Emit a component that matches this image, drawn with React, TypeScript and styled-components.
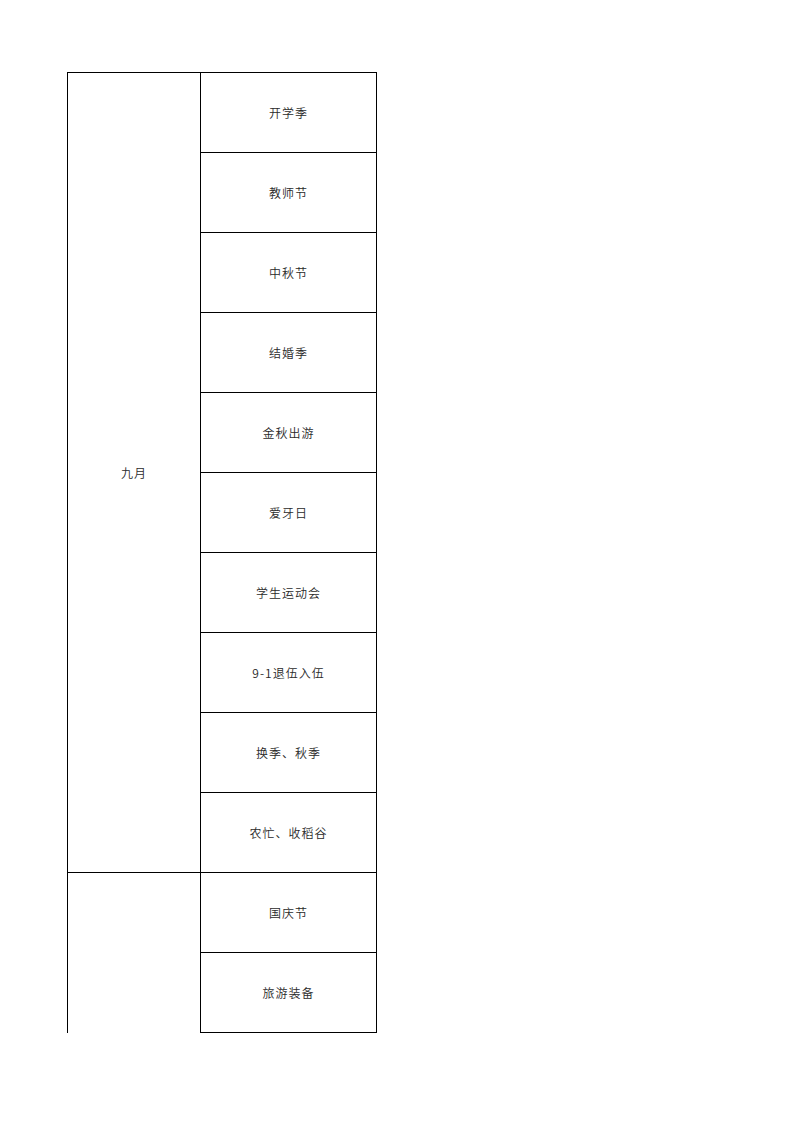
import styled, { createGlobalStyle } from "styled-components";

const GlobalStyle = createGlobalStyle`
  html, body {
    margin: 0;
    padding: 0;
    background: #ffffff;
  }
  body {
    font-family: "Noto Sans CJK SC", "Noto Sans", "Liberation Sans", sans-serif;
    color: #2a2a2a;
  }
`;

const Page = styled.div`
  width: 793px;
  height: 1122px;
  padding: 72px 0 0 67px;
  box-sizing: border-box;
  overflow: hidden;
`;

const Sheet = styled.div`
  display: grid;
  grid-template-columns: 133px 176px;
  grid-auto-rows: 80px;
  width: max-content;
  border-top: 1px solid #000;
  border-left: 1px solid #000;
`;

const Cell = styled.div<{ $span?: number; $open?: boolean; $col: number }>`
  box-sizing: border-box;
  grid-column: ${(p) => p.$col};
  grid-row: ${(p) => (p.$span ? `span ${p.$span}` : "auto")};
  display: flex;
  align-items: center;
  justify-content: center;
  border-right: 1px solid #000;
  border-bottom: ${(p) => (p.$open ? "none" : "1px solid #000")};
  font-size: 12px;
  font-weight: 350;
  letter-spacing: 1px;
  line-height: 1;
`;

const months = [
  {
    name: "九月",
    events: [
      "开学季",
      "教师节",
      "中秋节",
      "结婚季",
      "金秋出游",
      "爱牙日",
      "学生运动会",
      "9-1退伍入伍",
      "换季、秋季",
      "农忙、收稻谷",
    ],
    open: false,
  },
  {
    name: "",
    events: ["国庆节", "旅游装备"],
    open: true,
  },
];

export default function App() {
  return (
    <Page>
      <GlobalStyle />
      <Sheet>
        {months.map((m, i) => [
          <Cell key={`m${i}`} $col={1} $span={m.events.length} $open={m.open}>
            {m.name}
          </Cell>,
          ...m.events.map((e, j) => (
            <Cell key={`e${i}-${j}`} $col={2}>
              {e}
            </Cell>
          )),
        ])}
      </Sheet>
    </Page>
  );
}
